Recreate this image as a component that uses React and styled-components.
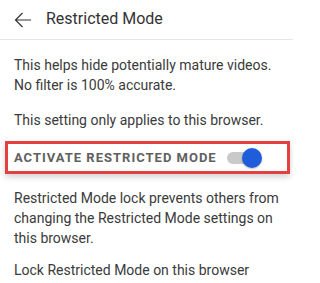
import React from 'react'
import styled, { createGlobalStyle } from 'styled-components'

const GlobalStyle = createGlobalStyle`
  html, body {
    margin: 0;
    padding: 0;
    background: #fff;
  }
  body {
    font-family: Roboto, "Liberation Sans", sans-serif;
  }
`

const Panel = styled.div`
  width: 293px;
  height: 283px;
  overflow: hidden;
  background: #fff;
`

const Header = styled.div`
  height: 39px;
  display: flex;
  align-items: center;
  padding-left: 13px;
  border-bottom: 1px solid #e6e6e6;
`

const BackButton = styled.span`
  display: flex;
  width: 20px;
  height: 20px;
  margin-right: 13px;
  color: #333;
`

const Title = styled.h1`
  margin: 0;
  font-size: 16px;
  font-weight: 400;
  color: #333;
  padding-bottom: 2px;
`

const Body = styled.div`
  padding: 15px 14px 0 14px;
`

const Text = styled.p`
  margin: ${({ mt }) => mt || 0}px 0 0 0;
  font-size: 14px;
  line-height: 20px;
  color: #3a3a3a;
`

const Highlight = styled.div`
  margin: 11px 0 0 -9px;
  width: 273px;
  height: 27px;
  border: 3px solid #e2413f;
  box-shadow: 0 3px 6px rgba(0, 0, 0, 0.18);
  display: flex;
  align-items: center;
  padding-left: 6px;
`

const Label = styled.span`
  font-size: 13px;
  font-weight: 700;
  letter-spacing: 1px;
  color: #606060;
  text-transform: uppercase;
`

const Track = styled.span`
  position: relative;
  display: block;
  width: 32px;
  height: 12px;
  margin-left: 10px;
  border-radius: 6px;
  background: ${({ on }) => (on ? '#c9c9c9' : '#bbb')};
`

const Knob = styled.span`
  position: absolute;
  top: -4px;
  left: ${({ on }) => (on ? '15px' : '-3px')};
  width: 20px;
  height: 20px;
  border-radius: 50%;
  background: ${({ on }) => (on ? '#1f5ddb' : '#f1f1f1')};
  box-shadow: 0 1px 2px rgba(0, 0, 0, 0.25);
`

const Toggle = ({ on }) => (
  <Track on={on ? 1 : 0}>
    <Knob on={on ? 1 : 0} />
  </Track>
)

const BackArrow = () => (
  <svg width="20" height="20" viewBox="0 0 20 20" fill="none" stroke="currentColor" strokeWidth="1.2">
    <path d="M18 10H2.5M9.5 3L2.5 10L9.5 17" />
  </svg>
)

const App = () => (
  <Panel>
    <GlobalStyle />
    <Header>
      <BackButton><BackArrow /></BackButton>
      <Title>Restricted Mode</Title>
    </Header>
    <Body>
      <Text>This helps hide potentially mature videos. No filter is 100% accurate.</Text>
      <Text mt={15}>This setting only applies to this browser.</Text>
      <Highlight>
        <Label>Activate Restricted Mode</Label>
        <Toggle on />
      </Highlight>
      <Text mt={14}>Restricted Mode lock prevents others from changing the Restricted Mode settings on this browser.</Text>
      <Text mt={12}>Lock Restricted Mode on this browser</Text>
    </Body>
  </Panel>
)

export default App
